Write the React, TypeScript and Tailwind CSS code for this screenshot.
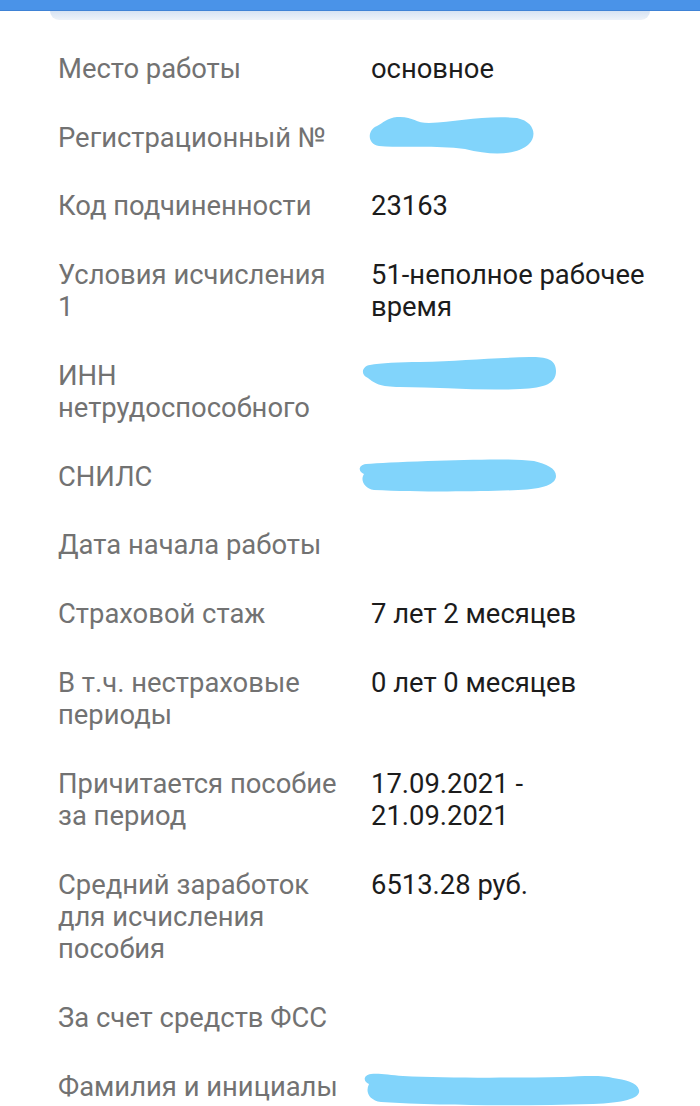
import React from "react";

type Row = { label: string; value?: React.ReactNode; blob?: "reg" | "inn" | "snils" | "fio" };

const rows: Row[] = [
  { label: "Место работы", value: "основное" },
  { label: "Регистрационный №", blob: "reg" },
  { label: "Код подчиненности", value: "23163" },
  { label: "Условия исчисления 1", value: "51-неполное рабочее время" },
  { label: "ИНН нетрудоспособного", blob: "inn" },
  { label: "СНИЛС", blob: "snils" },
  { label: "Дата начала работы" },
  { label: "Страховой стаж", value: "7 лет 2 месяцев" },
  { label: "В т.ч. нестраховые периоды", value: "0 лет 0 месяцев" },
  { label: "Причитается пособие за период", value: "17.09.2021 - 21.09.2021" },
  { label: "Средний заработок для исчисления пособия", value: "6513.28 руб." },
  { label: "За счет средств ФСС" },
  { label: "Фамилия и инициалы", blob: "fio" },
];

function Blob({ kind }: { kind: "reg" | "inn" | "snils" | "fio" }) {
  const fill = "#81d4fb";
  if (kind === "reg") {
    return (
      <svg className="absolute left-[-6px] top-[-10px]" width="172" height="46" viewBox="0 0 172 46">
        <path
          fill={fill}
          d="M12 14 C 2 18, 2 32, 14 34 C 40 36, 70 33, 100 37 C 128 44, 152 43, 164 32 C 172 24, 170 10, 152 6 C 120 3, 92 10, 64 11 C 50 11, 48 4, 32 5 C 22 6, 18 11, 12 14 Z"
        />
      </svg>
    );
  }
  if (kind === "inn") {
    return (
      <svg className="absolute left-[-11px] top-[-5px]" width="198" height="38" viewBox="0 0 198 38">
        <path
          fill={fill}
          d="M10 10 C 2 11, 0 20, 8 23 C 14 28, 20 32, 40 32 C 80 32, 120 36, 160 34 C 186 33, 196 28, 196 16 C 196 4, 186 2, 170 2 C 130 3, 100 6, 60 7 C 40 7, 20 8, 10 10 Z"
        />
      </svg>
    );
  }
  if (kind === "snils") {
    return (
      <svg className="absolute left-[-13px] top-[-3px]" width="200" height="36" viewBox="0 0 200 36">
        <path
          fill={fill}
          d="M8 6 C 0 7, 0 14, 6 16 C 2 22, 6 30, 16 32 C 60 34, 120 34, 160 32 C 186 31, 198 26, 198 18 C 198 10, 188 6, 176 3 C 150 0, 110 2, 70 3 C 40 4, 20 5, 8 6 Z"
        />
      </svg>
    );
  }
  return (
    <svg className="absolute left-[-8px] top-[-1px]" width="280" height="38" viewBox="0 0 280 38">
      <path
        fill={fill}
        d="M8 4 C 0 5, 0 12, 6 14 C 2 22, 6 30, 18 32 C 80 36, 160 36, 230 34 C 262 33, 278 28, 276 20 C 274 12, 262 10, 250 8 C 240 5, 220 6, 200 7 C 140 8, 80 8, 40 6 C 26 5, 16 3, 8 4 Z"
      />
    </svg>
  );
}

export default function App() {
  return (
    <div className="min-h-[1106px] w-[700px] bg-white overflow-hidden" style={{ fontFamily: "Roboto, 'Noto Sans', sans-serif" }}>
      <div className="h-[11px] bg-[#4a93e8] border-b border-[#3f83d6]" />
      <div className="mx-[50px] h-[9px] rounded-b-[14px] bg-gradient-to-b from-[#d6e3f3] to-[#eef3f9]" />
      <div className="pt-[15px]">
        {rows.map((r, i) => (
          <div key={i} className="grid grid-cols-[313px_290px] pl-[58px] py-[18.1px] text-[27.4px] leading-[32.4px]">
            <div className="pr-[24px] text-[#727272]">{r.label}</div>
            <div className="relative text-[#1c1c1c]">
              {r.value ?? (r.blob ? <span>&nbsp;</span> : null)}
              {r.blob && <Blob kind={r.blob} />}
            </div>
          </div>
        ))}
      </div>
    </div>
  );
}
